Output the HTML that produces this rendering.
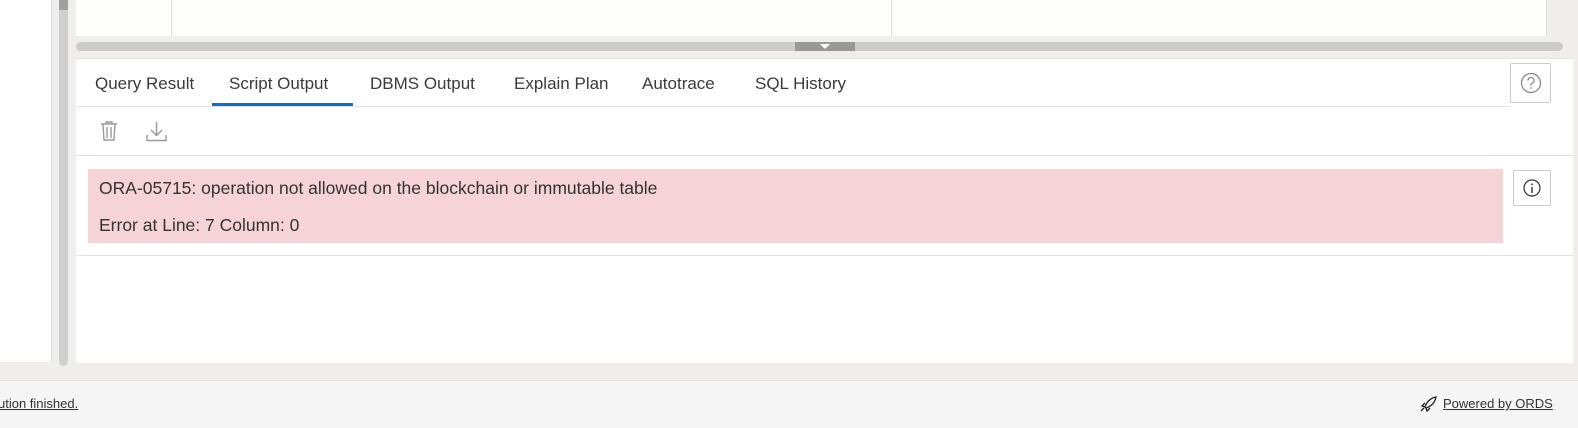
<!DOCTYPE html>
<html><head><style>
*{margin:0;padding:0;box-sizing:border-box}
body{width:1578px;height:428px;background:#efeeed;font-family:"Segoe UI","Liberation Sans",sans-serif;position:relative;overflow:hidden;color:#333}
.a{position:absolute}
.tab{position:absolute;top:74px;font-size:17px;color:#3a3a3a}
</style></head><body>
<div class="a" style="left:0;top:0;width:52px;height:362px;background:#fff;border-right:1px solid #ddd;border-bottom-right-radius:3px"></div>
<div class="a" style="left:59px;top:0;width:9px;height:366px;background:#cfcfcf;border-radius:0 0 5px 5px"></div>
<div class="a" style="left:59px;top:0;width:9px;height:10px;background:#a0a0a0"></div>
<div class="a" style="left:76px;top:0;width:1470px;height:36px;background:#fefefd"></div>
<div class="a" style="left:171px;top:0;width:1px;height:36px;background:#ddd"></div>
<div class="a" style="left:891px;top:0;width:1px;height:36px;background:#ddd"></div>
<div class="a" style="left:1546px;top:0;width:1px;height:36px;background:#ddd"></div>
<div class="a" style="left:76px;top:42px;width:1487px;height:9px;background:#cbcbcb;border-radius:5px"></div>
<div class="a" style="left:795px;top:42px;width:60px;height:9px;background:#999"></div>
<div class="a" style="left:820px;top:44px;width:0;height:0;border-left:5px solid transparent;border-right:5px solid transparent;border-top:5px solid #fff"></div>
<div class="a" style="left:76px;top:58px;width:1497px;height:305px;background:#fff;border-top:1px solid #e2e2e2"></div>
<div class="tab" style="left:95px">Query Result</div>
<div class="tab" style="left:229px">Script Output</div>
<div class="tab" style="left:370px">DBMS Output</div>
<div class="tab" style="left:514px">Explain Plan</div>
<div class="tab" style="left:642px">Autotrace</div>
<div class="tab" style="left:755px">SQL History</div>
<div class="a" style="left:212px;top:103px;width:141px;height:3px;background:#0572ce"></div>
<div class="a" style="left:76px;top:106px;width:1434px;height:1px;background:#e2e2e2"></div>
<div class="a" style="left:1510px;top:63px;width:41px;height:40px;border:1px solid #ccc;border-radius:2px"></div>
<svg class="a" style="left:1520px;top:72px" width="22" height="22" viewBox="0 0 22 22"><circle cx="11" cy="11" r="9.5" fill="none" stroke="#888" stroke-width="1.3"/><path d="M8 8.5a3 3 0 1 1 4 2.8c-.8.4-1 .9-1 1.7v.8" fill="none" stroke="#888" stroke-width="1.3"/><circle cx="11" cy="16" r=".9" fill="#888"/></svg>
<svg class="a" style="left:99px;top:120px" width="20" height="22" viewBox="0 0 20 22"><path d="M2 4h16M7 4V2h6v2M4 4l1 16h10l1-16M8 7v11M12 7v11" fill="none" stroke="#999" stroke-width="1.4"/></svg>
<svg class="a" style="left:146px;top:121px" width="21" height="21" viewBox="0 0 21 21"><path d="M10.5 1v13M5 9l5.5 5.5L16 9M1 14v5.5h19V14" fill="none" stroke="#999" stroke-width="1.4"/></svg>
<div class="a" style="left:76px;top:155px;width:1497px;height:1px;background:#e2e2e2"></div>
<div class="a" style="left:88px;top:169px;width:1415px;height:74px;background:#f6d3d6"></div>
<div class="a" style="left:99px;top:178px;font-size:17.5px;color:#333">ORA-05715: operation not allowed on the blockchain or immutable table</div>
<div class="a" style="left:99px;top:215px;font-size:17.5px;color:#333">Error at Line: 7 Column: 0</div>
<div class="a" style="left:1513px;top:170px;width:38px;height:36px;border:1px solid #ccc;border-radius:2px"></div>
<svg class="a" style="left:1522px;top:178px" width="20" height="20" viewBox="0 0 20 20"><circle cx="10" cy="10" r="8" fill="none" stroke="#333" stroke-width="1.2"/><path d="M10 9v6" stroke="#333" stroke-width="1.4"/><circle cx="10" cy="6.3" r=".9" fill="#333"/></svg>
<div class="a" style="left:76px;top:255px;width:1497px;height:1px;background:#e2e2e2"></div>
<div class="a" style="left:0;top:380px;width:1578px;height:48px;background:#f5f5f5;border-top:1px solid #e4e4e4"></div>
<div class="a" style="left:-2px;top:396px;font-size:13px;color:#333;text-decoration:underline">ution finished.</div>
<svg class="a" style="left:1418px;top:396px" width="20" height="17" viewBox="0 0 20 17"><path d="M7 11C9 5 13 2 18 1c-1 5-4 9-10 11zM7 11l-3-1 3-3M8 12l1 3 3-3M6 12l-3 3" fill="none" stroke="#222" stroke-width="1.3"/></svg>
<div class="a" style="left:1443px;top:396px;font-size:13px;color:#333;text-decoration:underline">Powered by ORDS</div>
</body></html>
